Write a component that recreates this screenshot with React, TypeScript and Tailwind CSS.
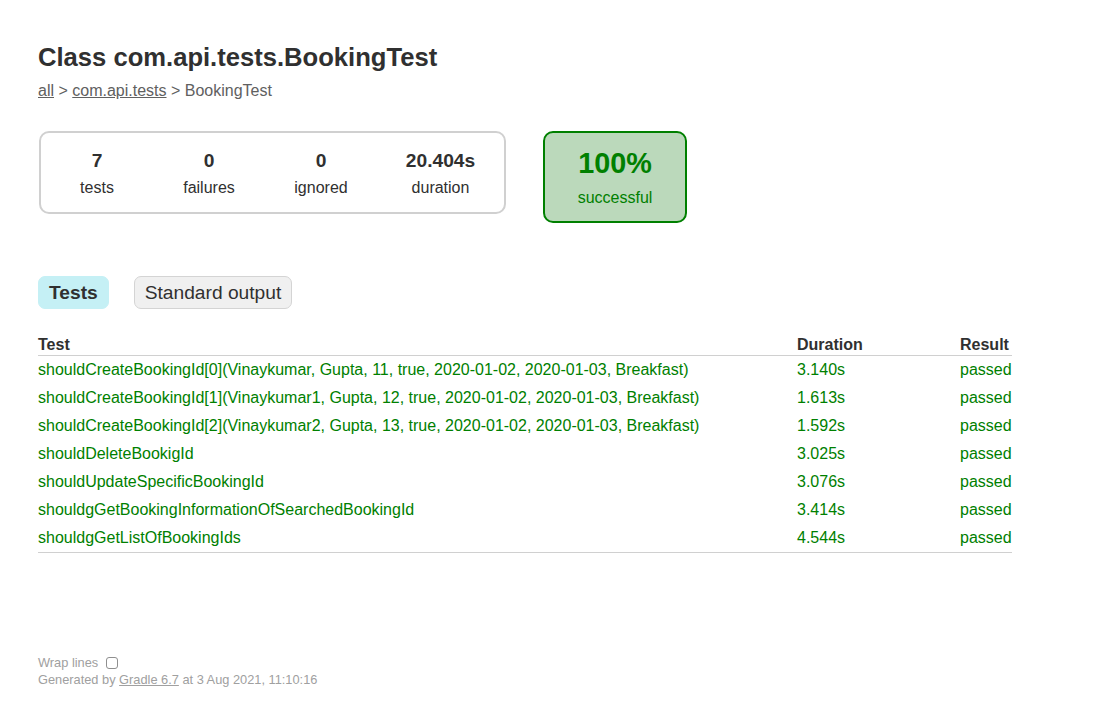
const tests = [
  { name: 'shouldCreateBookingId[0](Vinaykumar, Gupta, 11, true, 2020-01-02, 2020-01-03, Breakfast)', duration: '3.140s' },
  { name: 'shouldCreateBookingId[1](Vinaykumar1, Gupta, 12, true, 2020-01-02, 2020-01-03, Breakfast)', duration: '1.613s' },
  { name: 'shouldCreateBookingId[2](Vinaykumar2, Gupta, 13, true, 2020-01-02, 2020-01-03, Breakfast)', duration: '1.592s' },
  { name: 'shouldDeleteBookigId', duration: '3.025s' },
  { name: 'shouldUpdateSpecificBookingId', duration: '3.076s' },
  { name: 'shouldgGetBookingInformationOfSearchedBookingId', duration: '3.414s' },
  { name: 'shouldgGetListOfBookingIds', duration: '4.544s' },
]

const counters = [
  { value: '7', label: 'tests', width: 'w-[112px]' },
  { value: '0', label: 'failures', width: 'w-[112px]' },
  { value: '0', label: 'ignored', width: 'w-[112px]' },
  { value: '20.404s', label: 'duration', width: 'w-[127px]' },
]

export default function App() {
  return (
    <div className="min-h-[705px] bg-white pl-[38px] pt-[42px] font-['Liberation_Sans',Arial,sans-serif] text-[16px] text-[#303030]">
      <h1 className="text-[25.6px] font-bold leading-[30px]">Class com.api.tests.BookingTest</h1>

      <div className="mt-[10px] leading-[18px] text-[#606060]">
        <a className="underline">all</a> &gt; <a className="underline">com.api.tests</a> &gt; BookingTest
      </div>

      {/* summary */}
      <div className="mt-[31px] flex items-start">
        <div className="ml-[1px] flex rounded-[10px] border-2 border-[#d0d0d0]">
          {counters.map((c) => (
            <div key={c.label} className={`${c.width} pb-[15px] pt-[17px] text-center`}>
              <div className="text-[19.2px] font-bold leading-[22px]">{c.value}</div>
              <div className="mt-[7px] leading-[18px]">{c.label}</div>
            </div>
          ))}
        </div>
        <div className="ml-[37px] w-[144px] rounded-[10px] border-2 border-[#008000] bg-[#bbd9bb] pb-[14px] pt-[14px] text-center text-[#008000]">
          <div className="text-[28.8px] font-bold leading-[32px]">100%</div>
          <div className="mt-[10px] leading-[18px]">successful</div>
        </div>
      </div>

      {/* tabs */}
      <div className="mt-[53px] flex gap-[25px]">
        <div className="rounded-[7px] border border-[#c5f0f5] bg-[#c5f0f5] px-[10px] py-[5px] text-[19.2px] font-bold leading-[21px]">
          Tests
        </div>
        <div className="rounded-[7px] border border-[#d4d4d4] bg-[#f0f0f0] px-[10px] py-[5px] text-[19.2px] leading-[21px]">
          Standard output
        </div>
      </div>

      <table className="mt-[26px] w-[974px] border-collapse">
        <thead>
          <tr className="border-b border-[#d0d0d0]">
            <th className="w-[759px] pb-[1px] pt-[1px] text-left font-bold leading-[18px]">Test</th>
            <th className="w-[163px] pb-[1px] pt-[1px] text-left font-bold leading-[18px]">Duration</th>
            <th className="pb-[1px] pt-[1px] text-left font-bold leading-[18px]">Result</th>
          </tr>
        </thead>
        <tbody className="text-[#008000]">
          {tests.map((t, i) => (
            <tr key={t.name} className={i === tests.length - 1 ? 'border-b border-[#d0d0d0]' : ''}>
              <td className="whitespace-nowrap pb-[5px] pt-[5px] leading-[18px]">{t.name}</td>
              <td className="pb-[5px] pt-[5px] leading-[18px]">{t.duration}</td>
              <td className="pb-[5px] pt-[5px] leading-[18px]">passed</td>
            </tr>
          ))}
        </tbody>
      </table>

      <div className="mt-[101px] whitespace-nowrap text-[12.8px] leading-[17px] text-[#a0a0a0]">
        <div className="flex items-center">
          Wrap lines
          <span className="ml-[8px] inline-block h-[12px] w-[12px] rounded-[3px] border border-[#8f8f8f] bg-white" />
        </div>
        <div>
          Generated by <a className="underline">Gradle 6.7</a> at 3 Aug 2021, 11:10:16
        </div>
      </div>
    </div>
  )
}
